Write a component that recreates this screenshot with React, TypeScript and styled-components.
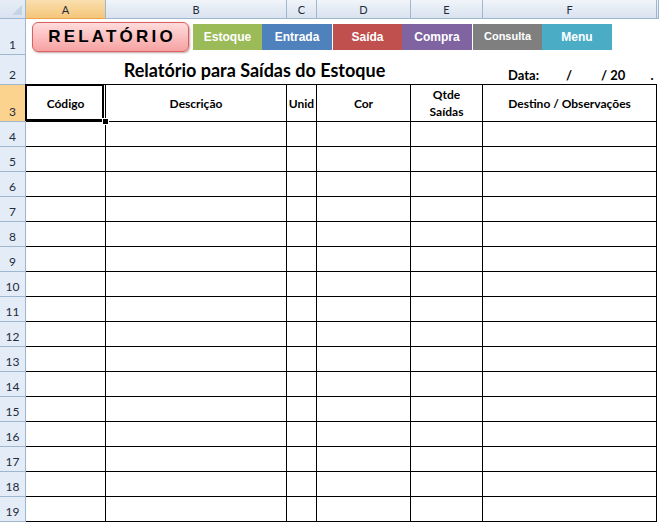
import React from "react";
import styled, { createGlobalStyle, css } from "styled-components";

const GlobalStyle = createGlobalStyle`
  html, body { margin: 0; padding: 0; background: #ffffff; }
  body { overflow: hidden; }
`;

const HEADER_BORDER = "#9EB6CE";
const GRID_LINE = "#000000";

const Sheet = styled.div`
  display: grid;
  grid-template-columns: 26px 80px 181px 30px 94px 72px 174px 2px;
  grid-template-rows: 19px 36px 30px 37px repeat(16, 25px);
  width: 659px;
  height: 523px;
  font-family: Lato, "Open Sans", sans-serif;
  color: #000;
`;

const Corner = styled.div`
  position: relative;
  box-sizing: border-box;
  background: linear-gradient(#e6edf6, #d9e3ef);
  border-right: 1px solid ${HEADER_BORDER};
  border-bottom: 1px solid ${HEADER_BORDER};
  &::after {
    content: "";
    position: absolute;
    right: 3px;
    bottom: 3px;
    width: 0;
    height: 0;
    border-left: 10px solid transparent;
    border-bottom: 10px solid #c4d3e5;
  }
`;

const selectedHeader = css`
  background: linear-gradient(#f9dfae, #f5c67a);
`;

const ColHeader = styled.div<{ $selected?: boolean }>`
  box-sizing: border-box;
  display: flex;
  align-items: center;
  justify-content: center;
  font-size: 11px;
  color: #1f2b3d;
  background: linear-gradient(#f1f5fa 0%, #e4ebf4 50%, #d9e3ef 100%);
  border-right: 1px solid ${HEADER_BORDER};
  border-bottom: 1px solid ${HEADER_BORDER};
  ${(p) => p.$selected && selectedHeader}
  ${(p) => p.$selected && css`border-bottom-color: #f2a34a;`}
`;

const RowHeader = styled.div<{ $selected?: boolean }>`
  box-sizing: border-box;
  display: flex;
  align-items: flex-end;
  justify-content: center;
  padding-bottom: 2px;
  font-size: 12px;
  color: #1f2b3d;
  background: #e4ecf7;
  border-right: 1px solid ${HEADER_BORDER};
  border-bottom: 1px solid ${HEADER_BORDER};
  ${(p) =>
    p.$selected &&
    css`
      background: #fbd38e;
      border-right-color: #f2a34a;
    `}
`;

const Filler = styled.div``;

/* Row 1: report badge and the navigation buttons */
const Toolbar = styled.div`
  grid-column: 2 / span 6;
  display: flex;
  align-items: center;
  padding-left: 6px;
`;

const ReportBadge = styled.div`
  box-sizing: border-box;
  width: 157px;
  height: 30px;
  margin-right: 4px;
  display: flex;
  align-items: center;
  justify-content: center;
  border: 1px solid #d9605f;
  border-radius: 6px;
  background: linear-gradient(#ffdcdc 0%, #fbbcbc 55%, #f5a2a2 100%);
  box-shadow: 1px 1px 2px rgba(120, 60, 60, 0.45);
  font-family: "Liberation Sans", Arial, sans-serif;
  font-weight: bold;
  font-size: 17px;
  letter-spacing: 3.2px;
  padding-left: 3px;
  color: #000;
`;

const NavButton = styled.div<{ $bg: string; $w: number; $gap?: number; $light?: boolean }>`
  box-sizing: border-box;
  width: ${(p) => p.$w}px;
  height: 26px;
  margin-left: ${(p) => p.$gap ?? 0}px;
  display: flex;
  align-items: center;
  justify-content: center;
  background: ${(p) => p.$bg};
  color: #ffffff;
  font-family: "Liberation Sans", Arial, sans-serif;
  font-weight: bold;
  font-size: 12px;
  ${(p) =>
    p.$light &&
    css`
      font-size: 11px;
      align-items: flex-start;
      padding-top: 6px;
    `}
`;

/* Row 2: title and date line */
const TitleCell = styled.div`
  grid-column: 2 / span 5;
  box-sizing: border-box;
  display: flex;
  align-items: flex-end;
  justify-content: center;
  padding-bottom: 3px;
  border-bottom: 1px solid ${GRID_LINE};
  font-weight: bold;
  font-size: 18px;
`;

const DateCell = styled.div`
  box-sizing: border-box;
  display: flex;
  align-items: flex-end;
  padding-bottom: 1px;
  border-bottom: 1px solid ${GRID_LINE};
  font-weight: bold;
  font-size: 13px;
  white-space: pre;
`;

const DatePart = styled.span<{ $x: number }>`
  margin-left: ${(p) => p.$x}px;
`;

/* Table cells, rows 3 to 19 */
const Cell = styled.div<{ $head?: boolean; $active?: boolean }>`
  position: relative;
  box-sizing: border-box;
  border-right: 1px solid ${GRID_LINE};
  border-bottom: 1px solid ${GRID_LINE};
  ${(p) =>
    p.$head &&
    css`
      display: flex;
      flex-direction: column;
      align-items: center;
      justify-content: center;
      text-align: center;
      font-weight: bold;
      font-size: 12px;
      line-height: 17px;
    `}
  ${(p) =>
    p.$active &&
    css`
      &::before {
        content: "";
        position: absolute;
        inset: -1px 1px 0 -1px;
        border: 2px solid #000;
        pointer-events: none;
      }
      &::after {
        content: "";
        position: absolute;
        right: -4px;
        bottom: -4px;
        width: 5px;
        height: 5px;
        background: #000;
        border: 1px solid #fff;
        z-index: 2;
      }
    `}
`;

const columns = ["A", "B", "C", "D", "E", "F"];

const headings: React.ReactNode[] = [
  "Código",
  "Descrição",
  "Unid",
  "Cor",
  <>
    Qtde
    <br />
    Saídas
  </>,
  "Destino / Observações",
];

const navItems = [
  { label: "Estoque", bg: "#9BBB59", w: 69, gap: 0 },
  { label: "Entrada", bg: "#4F81BD", w: 70, gap: 0 },
  { label: "Saída", bg: "#C0504D", w: 69, gap: 1 },
  { label: "Compra", bg: "#8064A2", w: 70, gap: 0 },
  { label: "Consulta", bg: "#7F7F7F", w: 69, gap: 1, light: true },
  { label: "Menu", bg: "#4BACC6", w: 70, gap: 0 },
];

const dataRows = Array.from({ length: 16 }, (_, i) => i + 4);

export default function App() {
  return (
    <>
      <GlobalStyle />
      <Sheet>
        <Corner />
        {columns.map((c) => (
          <ColHeader key={c} $selected={c === "A"}>
            {c}
          </ColHeader>
        ))}
        <ColHeader />

        <RowHeader>1</RowHeader>
        <Toolbar>
          <ReportBadge>RELATÓRIO</ReportBadge>
          {navItems.map((n) => (
            <NavButton key={n.label} $bg={n.bg} $w={n.w} $gap={n.gap} $light={n.light}>
              {n.label}
            </NavButton>
          ))}
        </Toolbar>
        <Filler />

        <RowHeader>2</RowHeader>
        <TitleCell>Relatório para Saídas do Estoque</TitleCell>
        <DateCell>
          <DatePart $x={25}>Data:</DatePart>
          <DatePart $x={27}>/</DatePart>
          <DatePart $x={29}>/ 20</DatePart>
          <DatePart $x={25}>.</DatePart>
        </DateCell>
        <Filler />

        <RowHeader $selected>3</RowHeader>
        {headings.map((h, i) => (
          <Cell key={i} $head $active={i === 0}>
            {h}
          </Cell>
        ))}
        <Filler />

        {dataRows.map((r) => (
          <React.Fragment key={r}>
            <RowHeader>{r}</RowHeader>
            {columns.map((c) => (
              <Cell key={c} />
            ))}
            <Filler />
          </React.Fragment>
        ))}
      </Sheet>
    </>
  );
}
